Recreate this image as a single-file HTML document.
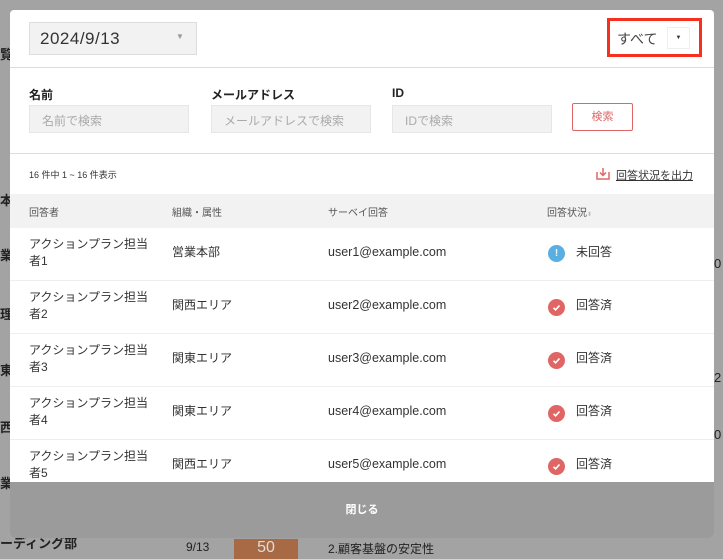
<!DOCTYPE html>
<html><head><meta charset="utf-8"><style>
*{margin:0;padding:0;box-sizing:border-box}
body{width:723px;height:550px;overflow:hidden;background:#a3a3a3;font-family:"Liberation Sans","Noto Sans CJK JP",sans-serif;color:#333;position:relative}
.a{position:absolute}
.bg{color:#222;font-size:12px}
.modal{left:10px;top:10px;width:704px;height:528px;background:#fff;border-radius:4px;overflow:hidden}
.sel{left:19px;top:12px;width:168px;height:33px;background:#f2f2f2;border:1px solid #ddd;font-size:17px;color:#333;padding:6px 10px;letter-spacing:.5px}
.lbl{font-size:12px;font-weight:bold;color:#222}
.inp{height:28px;width:160px;background:#f2f2f2;border:1px solid #e6e6e6;font-size:12px;color:#aaa;padding:6px 12px}
.row{left:0;width:704px;height:53px;border-bottom:1px solid #eee;font-size:12px;color:#333}
.row div{position:absolute;line-height:17px}
.ck{width:17px;height:17px;border-radius:50%;background:#e06666;color:#fff;font-size:10px;text-align:center}
.em{font-size:12.5px}
</style></head><body>
<div class="a bg" style="left:0;top:44px;font-weight:bold;font-size:13px">覧</div>
<div class="a bg" style="left:0;top:190px;font-weight:bold;font-size:13px">本</div>
<div class="a bg" style="left:0;top:245px;font-weight:bold;font-size:13px">業</div>
<div class="a bg" style="left:0;top:304px;font-weight:bold;font-size:13px">理</div>
<div class="a bg" style="left:0;top:360px;font-weight:bold;font-size:13px">東</div>
<div class="a bg" style="left:0;top:417px;font-weight:bold;font-size:13px">西</div>
<div class="a bg" style="left:0;top:473px;font-weight:bold;font-size:13px">業</div>
<div class="a bg" style="left:714px;top:256px;font-size:13px">0</div>
<div class="a bg" style="left:714px;top:370px;font-size:13px">2</div>
<div class="a bg" style="left:714px;top:427px;font-size:13px">0</div>
<div class="a bg" style="left:0;top:533px;font-weight:bold;font-size:13px">ーディング部</div>
<div class="a bg" style="left:186px;top:540px;font-size:12px">9/13</div>
<div class="a" style="left:234px;top:539px;width:64px;height:20px;background:#a86a45;color:#ddd;font-size:16px;text-align:center">50</div>
<div class="a bg" style="left:328px;top:540px;font-size:12px">2.顧客基盤の安定性</div>

<div class="a modal">
 <div class="a sel">2024/9/13<span class="a" style="left:146px;top:9px;font-size:8px;color:#999">▼</span></div>
 <div class="a" style="left:597px;top:8px;width:95px;height:39px;border:3px solid #f5301f"></div>
 <div class="a" style="left:607px;top:19px;font-size:14px;color:#444">すべて</div>
 <div class="a" style="left:657px;top:17px;width:23px;height:22px;background:#fff;border:1px solid #eee;font-size:6px;text-align:center;line-height:21px;color:#333">▼</div>
 <div class="a" style="left:0;top:57px;width:704px;border-top:1px solid #ddd"></div>
 <div class="a lbl" style="left:19px;top:76px">名前</div>
 <div class="a lbl" style="left:201px;top:76px">メールアドレス</div>
 <div class="a lbl" style="left:382px;top:76px">ID</div>
 <div class="a inp" style="left:19px;top:95px">名前で検索</div>
 <div class="a inp" style="left:201px;top:95px">メールアドレスで検索</div>
 <div class="a inp" style="left:382px;top:95px">IDで検索</div>
 <div class="a" style="left:562px;top:93px;width:61px;height:28px;border:1px solid #e06666;border-radius:2px;color:#e06666;font-size:11px;text-align:center;line-height:26px">検索</div>
 <div class="a" style="left:0;top:143px;width:704px;border-top:1px solid #ddd"></div>
 <div class="a" style="left:19px;top:158px;font-size:9px;color:#333">16 件中 1 ~ 16 件表示</div>
 <svg class="a" style="left:586px;top:157px" width="14" height="13" viewBox="0 0 14 13"><path d="M1 5V12H13V5" fill="none" stroke="#e06666" stroke-width="1.5"/><path d="M7 1V8M4 5.5L7 8.5L10 5.5" fill="none" stroke="#e06666" stroke-width="1.5"/></svg>
 <div class="a" style="left:606px;top:157px;font-size:11px;color:#333;text-decoration:underline">回答状況を出力</div>
 <div class="a" style="left:0;top:184px;width:704px;height:34px;background:#f2f2f2;font-size:10px;color:#555">
  <span class="a" style="left:19px;top:10px">回答者</span>
  <span class="a" style="left:162px;top:10px">組織・属性</span>
  <span class="a" style="left:318px;top:10px">サーベイ回答</span>
  <span class="a" style="left:537px;top:10px">回答状況<span style="font-size:6px;color:#bbb">⬍</span></span>
 </div>
 <div class="a row" style="top:218px"><div style="left:19px;top:8px">アクションプラン担当<br>者1</div><div style="left:162px;top:16px">営業本部</div><div class="em" style="left:318px;top:16px">user1@example.com</div><div class="ck" style="left:538px;top:17px;background:#5aaee0;font-weight:bold">!</div><div style="left:566px;top:16px">未回答</div></div>
 <div class="a row" style="top:271px"><div style="left:19px;top:8px">アクションプラン担当<br>者2</div><div style="left:162px;top:16px">関西エリア</div><div class="em" style="left:318px;top:16px">user2@example.com</div><svg class="a" style="left:538px;top:18px" width="17" height="17"><circle cx="8.5" cy="8.5" r="8.5" fill="#e06666"/><path d="M5.5 8.8L7.6 10.8L11.5 6.5" fill="none" stroke="#fff" stroke-width="1.6"/></svg><div style="left:566px;top:16px">回答済</div></div>
 <div class="a row" style="top:324px"><div style="left:19px;top:8px">アクションプラン担当<br>者3</div><div style="left:162px;top:16px">関東エリア</div><div class="em" style="left:318px;top:16px">user3@example.com</div><svg class="a" style="left:538px;top:18px" width="17" height="17"><circle cx="8.5" cy="8.5" r="8.5" fill="#e06666"/><path d="M5.5 8.8L7.6 10.8L11.5 6.5" fill="none" stroke="#fff" stroke-width="1.6"/></svg><div style="left:566px;top:16px">回答済</div></div>
 <div class="a row" style="top:377px"><div style="left:19px;top:8px">アクションプラン担当<br>者4</div><div style="left:162px;top:16px">関東エリア</div><div class="em" style="left:318px;top:16px">user4@example.com</div><svg class="a" style="left:538px;top:18px" width="17" height="17"><circle cx="8.5" cy="8.5" r="8.5" fill="#e06666"/><path d="M5.5 8.8L7.6 10.8L11.5 6.5" fill="none" stroke="#fff" stroke-width="1.6"/></svg><div style="left:566px;top:16px">回答済</div></div>
 <div class="a row" style="top:430px"><div style="left:19px;top:8px">アクションプラン担当<br>者5</div><div style="left:162px;top:16px">関西エリア</div><div class="em" style="left:318px;top:16px">user5@example.com</div><svg class="a" style="left:538px;top:18px" width="17" height="17"><circle cx="8.5" cy="8.5" r="8.5" fill="#e06666"/><path d="M5.5 8.8L7.6 10.8L11.5 6.5" fill="none" stroke="#fff" stroke-width="1.6"/></svg><div style="left:566px;top:16px">回答済</div></div>
 <div class="a" style="left:0;top:472px;width:704px;height:56px;background:#9b9b9b;color:#fff;font-size:11px;font-weight:bold;text-align:center;line-height:56px">閉じる</div>
</div>
</body></html>
